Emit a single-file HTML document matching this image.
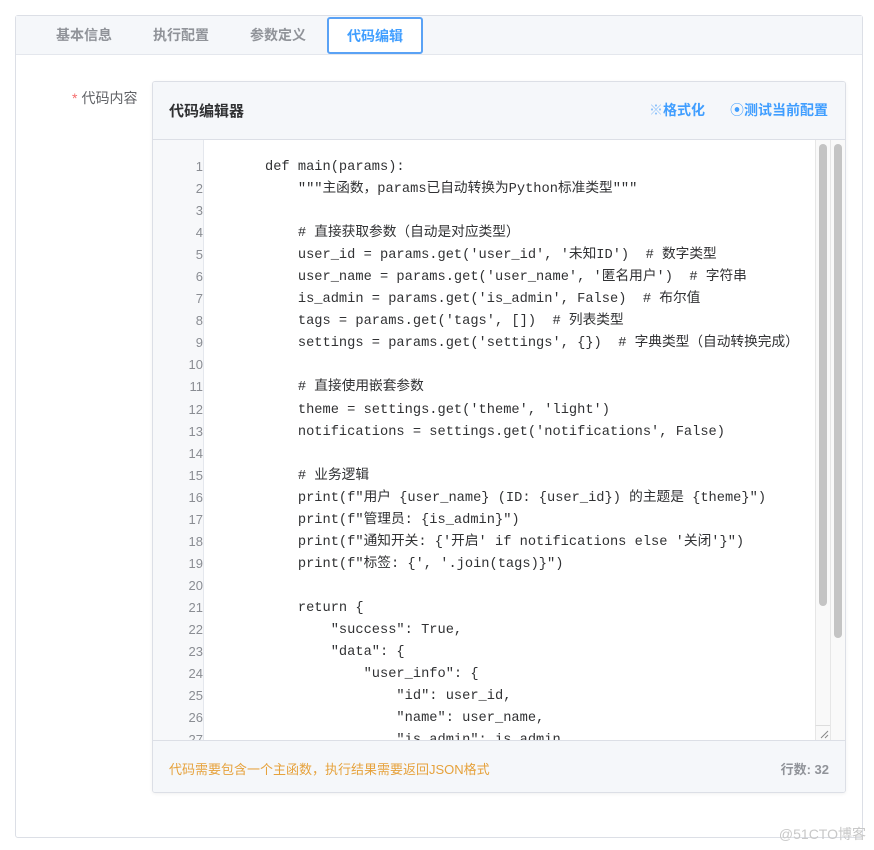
<!DOCTYPE html>
<html><head><meta charset="utf-8"><style>
*{box-sizing:border-box;margin:0;padding:0}
body{width:874px;height:850px;background:#fff;font-family:"Liberation Sans","Noto Sans CJK SC",sans-serif;position:relative;overflow:hidden}
.card{position:absolute;left:15px;top:15px;width:848px;height:823px;border:1px solid #dcdfe6;border-radius:3px}
.tabs{height:39px;background:#f5f7fa;border-bottom:1px solid #e4e7ed;position:relative}
.tab{position:absolute;top:0;height:39px;line-height:38px;font-size:14px;color:#909399;font-weight:bold}
.tab.active{top:1px;left:311px;width:96px;height:37px;line-height:35px;background:#fff;border:2px solid #5aa2f5;border-radius:3px;color:#409eff;text-align:center}
.label{position:absolute;left:72px;top:88px;font-size:14px;color:#606266}
.label b{color:#f56c6c;font-weight:normal;margin-right:4px}
.ed{position:absolute;left:152px;top:81px;width:694px;height:712px;border:1px solid #dcdfe6;border-radius:3px;box-shadow:0 1px 3px rgba(0,0,0,.06);overflow:hidden}
.hd{height:58px;background:#f5f7fa;border-bottom:1px solid #dcdfe6;position:relative}
.hd .t{position:absolute;left:16px;top:18px;font-size:15px;font-weight:bold;color:#303133}
.hd .a{position:absolute;top:18px;font-size:14px;color:#409eff;font-weight:bold}
.body{position:absolute;top:58px;left:0;width:692px;height:600px;overflow:hidden;background:#fff}
.gut{position:absolute;left:0;top:0;width:51px;height:600px;background:#f7f8fa;border-right:1px solid #e4e7ed}
.nums{position:absolute;left:0;top:16px;width:50px;text-align:right;font-size:13px;line-height:22.05px;color:#8a8d93;font-family:"Liberation Sans",sans-serif}
pre{position:absolute;left:112px;top:17px;font-family:"Liberation Mono","Noto Sans CJK SC",monospace;font-size:13.7px;line-height:22.05px;color:#303133}
.tr{position:absolute;top:0;width:15px;height:600px;background:#f9f9f9;border-left:1px solid #e6e6e6}
.th{position:absolute;left:3px;width:8px;border-radius:4px;background:#c4c4c4;top:4px}
.rz{position:absolute;left:662px;top:585px;width:15px;height:15px;border-top:1px solid #ddd;border-left:1px solid #e6e6e6;background:#f9f9f9}
.ft{position:absolute;top:658px;left:0;width:692px;height:53px;background:#f5f7fa;border-top:1px solid #dcdfe6}
.ft .l{position:absolute;left:16px;top:18px;font-size:13px;color:#e6a23c}
.ft .r{position:absolute;right:16px;top:18px;font-size:13px;color:#909399;font-weight:bold}
.wm{position:absolute;right:8px;top:824px;font-size:14px;color:#c8c8c8}
</style></head><body>
<div class="card">
<div class="tabs">
<div class="tab" style="left:40px">基本信息</div>
<div class="tab" style="left:137px">执行配置</div>
<div class="tab" style="left:234px">参数定义</div>
<div class="tab active">代码编辑</div>
</div>
</div>
<div class="label"><b>*</b>代码内容</div>
<div class="ed">
<div class="hd"><div class="t">代码编辑器</div>
<div class="a" style="left:496px"><span style="font-weight:normal;color:#8cc1fa">※</span>格式化</div>
<div class="a" style="left:577px"><span style="font-weight:normal">⦿</span>测试当前配置</div></div>
<div class="body">
<div class="gut"><div class="nums">1<br>2<br>3<br>4<br>5<br>6<br>7<br>8<br>9<br>10<br>11<br>12<br>13<br>14<br>15<br>16<br>17<br>18<br>19<br>20<br>21<br>22<br>23<br>24<br>25<br>26<br>27</div></div>
<pre>def main(params):
    """主函数，params已自动转换为Python标准类型"""

    # 直接获取参数（自动是对应类型）
    user_id = params.get('user_id', '未知ID')  # 数字类型
    user_name = params.get('user_name', '匿名用户')  # 字符串
    is_admin = params.get('is_admin', False)  # 布尔值
    tags = params.get('tags', [])  # 列表类型
    settings = params.get('settings', {})  # 字典类型（自动转换完成）

    # 直接使用嵌套参数
    theme = settings.get('theme', 'light')
    notifications = settings.get('notifications', False)

    # 业务逻辑
    print(f"用户 {user_name} (ID: {user_id}) 的主题是 {theme}")
    print(f"管理员: {is_admin}")
    print(f"通知开关: {'开启' if notifications else '关闭'}")
    print(f"标签: {', '.join(tags)}")

    return {
        "success": True,
        "data": {
            "user_info": {
                "id": user_id,
                "name": user_name,
                "is_admin": is_admin,</pre>
<div class="tr" style="left:662px"><div class="th" style="height:462px"></div></div>
<div class="tr" style="left:677px"><div class="th" style="height:494px"></div></div>
<div class="rz"><svg width="14" height="14" style="position:absolute;left:0;top:0"><path d="M5 12L12 5M9 12L12 9" stroke="#888" stroke-width="1"/></svg></div>
</div>
<div class="ft"><div class="l">代码需要包含一个主函数，执行结果需要返回JSON格式</div><div class="r">行数: 32</div></div>
</div>
<div class="wm">@51CTO博客</div>
</body></html>
